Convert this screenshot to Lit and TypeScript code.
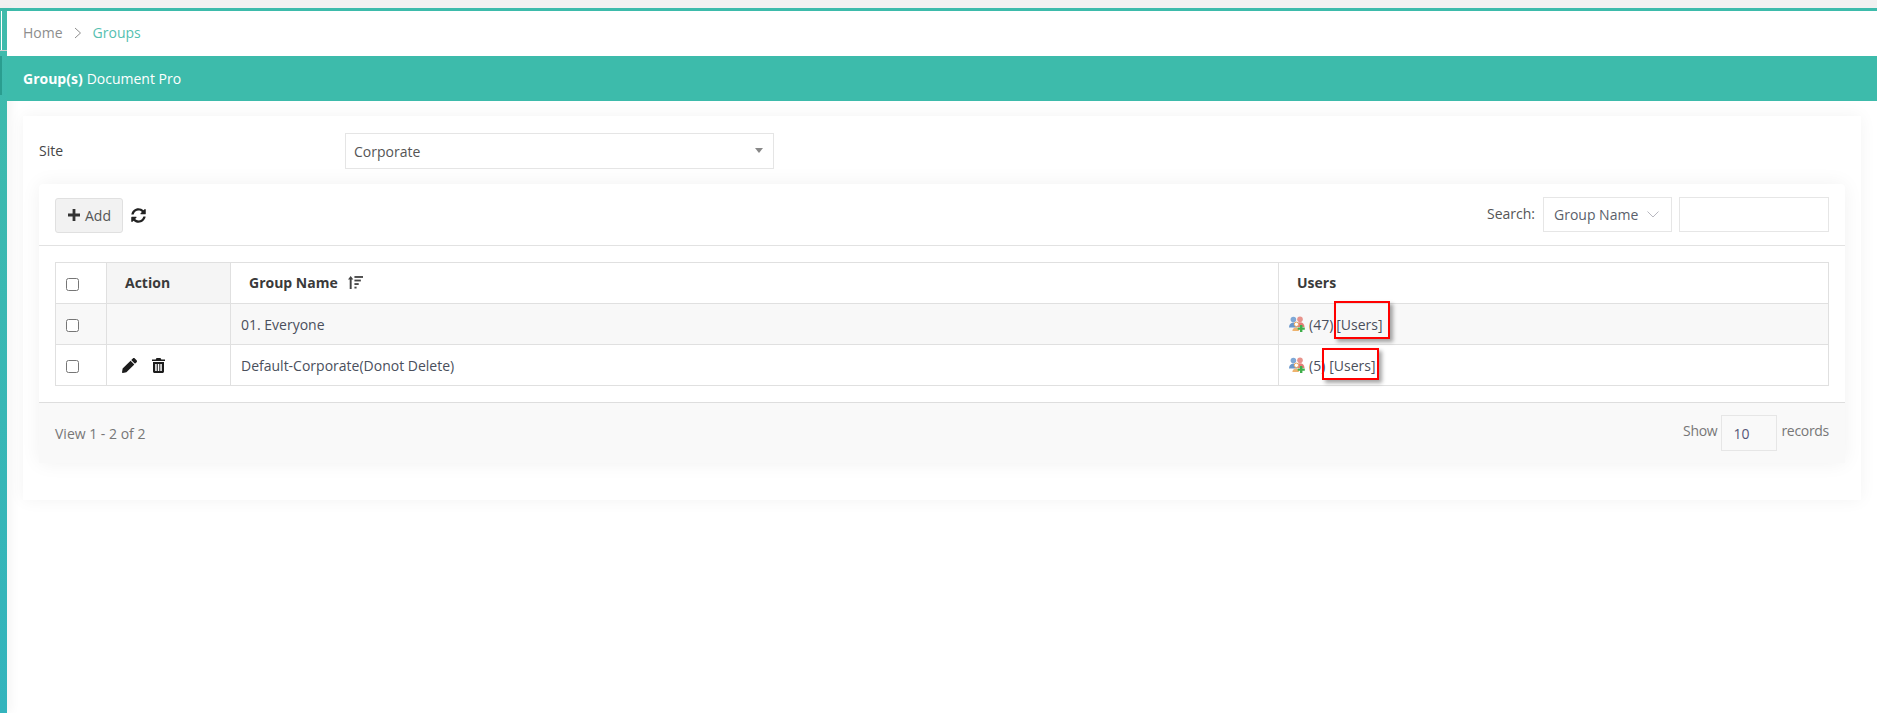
import { LitElement, html, css } from "lit";
import { customElement } from "lit/decorators.js";

const groupIcon = html`<svg class="gicon" viewBox="0 0 16 16" width="16" height="16">
  <circle cx="11" cy="3.200" r="2.800" fill="#e8938c"/>
  <path d="M7 11c0-3 1.500-4.800 4-4.800s4.500 1.800 4.500 4.800z" fill="#e47d76"/>
  <circle cx="4.400" cy="3.600" r="2.800" fill="#7fa8d6"/>
  <path d="M0 11.600c0-3 1.700-4.800 4.200-4.800s4 1.800 4 4.800z" fill="#6a97cb"/>
  <circle cx="7.400" cy="8.300" r="2.200" fill="#fff" stroke="#e8a55c" stroke-width="1"/>
  <path d="M3.400 15c0-2.200 1.500-3.500 4-3.500 1 0 1.800.2 2.400.7V15z" fill="#eeb36f"/>
  <path d="M11 9h2.400v2.400h2.400v2.400h-2.400V16H11v-2.200H8.700v-2.400H11z" fill="#3fae4a"/>
</svg>`;

@customElement("app-root")
export class AppRoot extends LitElement {
  static styles = css`
    :host {
      display: block;
      height: 713px;
      overflow: hidden;
      position: relative;
      background: #fff;
      font-family: "Open Sans", "Noto Sans", sans-serif;
      font-size: 14px;
      color: #464a55;
    }
    .topband { height: 8px; background: #f1f1f1; }
    .topline { height: 3px; background: #3dbbab; }
    .frame { display: flex; height: 702px; }
    .rail {
      width: 7px;
      flex: none;
      background: linear-gradient(#3fbbab, #33b4bd);
      display: flex;
      flex-direction: column;
      box-shadow: 2px 0 12px rgba(0,0,0,.07);
    }
    .rail-a { height: 39px; flex: none; display: flex; border-bottom: 1px solid #cfcfcf; padding-left: 1px; }
    .rail-a i { display: block; width: 1px; background: #fff; }
    .rail-b { margin-top: 5px; height: 39px; width: 2px; background: #2a9d8f; }
    .main { flex: 1; min-width: 0; }
    .crumbs {
      height: 45px;
      display: flex;
      align-items: center;
      padding-left: 16px;
      background: #fff;
      color: #8d8d8d;
    }
    .crumbs span { margin-top: -2px; }
    .crumbs .chev { width: 8px; height: 12px; margin: -1px 11px 0 11px; }
    .crumbs .cur { color: #55bfb1; }
    .title {
      height: 45px;
      display: flex;
      align-items: center;
      padding-left: 16px;
      background: #3dbbab;
      color: #fff;
      gap: 4px;
    }
    .title b { font-weight: 700; }
    .card {
      margin: 15px 16px 0 16px;
      padding: 17px 16px 36px;
      background: #fff;
      box-shadow: 0 0 16px rgba(0,0,0,.05);
      height: 331px;
    }
    .site { display: flex; align-items: center; height: 36px; }
    .site label { width: 306px; margin-top: -1px; color: #454545; }
    .sel {
      width: 429px;
      height: 36px;
      box-sizing: border-box;
      border: 1px solid #e5e5e5;
      display: flex;
      align-items: center;
      justify-content: space-between;
      padding: 0 10px 0 8px;
      color: #555;
    }
    .caret { width: 0; height: 0; border: 4px solid transparent; border-top: 5px solid #888; border-bottom: 0; margin-top: -2px; }
    .panel {
      margin-top: 15px;
      background: #fff;
      box-shadow: 0 0 20px rgba(0,0,0,.06);
      height: 279px;
      display: flex;
      flex-direction: column;
      border-radius: 4px 4px 0 0;
    }
    .toolbar {
      height: 61px;
      box-sizing: content-box;
      border-bottom: 1px solid #e2e2e2;
      display: flex;
      align-items: center;
      padding: 0 16px;
    }
    .add {
      width: 68px;
      height: 35px;
      box-sizing: border-box;
      background: #f2f2f2;
      border: 1px solid #e0e0e0;
      border-radius: 3px;
      display: flex;
      align-items: center;
      gap: 5px;
      padding-left: 12px;
      color: #555;
      font: inherit;
      margin-top: 1px;
    }
    .refresh { width: 15px; height: 15px; margin-left: 8px; margin-top: 1px; fill: #222; }
    .spacer { flex: 1; }
    .srch { margin-right: 8px; color: #555; margin-top: -3px; }
    .field {
      height: 35px;
      box-sizing: border-box;
      border: 1px solid #e6e6e6;
      display: flex;
      align-items: center;
      margin-top: -1px;
    }
    .field.a { width: 129px; padding-left: 10px; gap: 9px; color: #5b5f6b; margin-right: 7px; }
    .field.a span { margin-top: 1px; }
    .field.b { width: 150px; }
    .down { width: 12px; height: 7px; }
    .tablewrap { padding: 16px; }
    table {
      width: 100%;
      border-collapse: collapse;
      table-layout: fixed;
      border: 1px solid #e0e0e0;
    }
    th, td {
      border: 1px solid #e0e0e0;
      height: 41px;
      box-sizing: border-box;
      padding: 0;
      text-align: left;
      font-weight: 400;
      color: #4a4f5c;
    }
    th { font-weight: 700; color: #3a3a3a; padding-bottom: 2px; }
    th:first-child { padding-bottom: 0; }
    th.act { background: #f5f5f5; padding-left: 18px; }
    th.nm { padding-left: 18px; }
    th.us { padding-left: 18px; }
    td.nm { padding-left: 10px; }
    td.us { padding-left: 10px; }
    .c0 { width: 51px; }
    .c1 { width: 124px; }
    .c3 { width: 550px; }
    tr.odd td { background: #f8f8f8; }
    .cbx {
      display: block;
      width: 13px;
      height: 13px;
      box-sizing: border-box;
      border: 1px solid #767676;
      border-radius: 2.500px;
      background: #fff;
      margin: 2px 0 0 10px;
    }
    .sorti { width: 15px; height: 15px; vertical-align: -2px; margin-left: 7px; fill: #444; }
    .iconrow { display: flex; align-items: center; gap: 15px; padding-left: 15px; }
    .iconrow svg { fill: #1c1c1c; display: block; }
    .ucell { display: flex; align-items: center; gap: 4px; }
    .gicon { flex: none; margin-top: -1px; }
    .ucell .tight { margin-left: -1px; }
    .foot {
      flex: 1;
      background: #f9f9f9;
      border-top: 1px solid #dedede;
      display: flex;
      align-items: center;
      padding: 0 16px;
      color: #777;
    }
    .show { display: flex; align-items: center; gap: 4px; }
    .pg {
      width: 56px;
      height: 36px;
      box-sizing: border-box;
      border: 1px solid #e6e6e6;
      display: flex;
      align-items: center;
      padding-left: 11px;
      color: #557;
    }
    .show > span { margin-top: -5px; letter-spacing: -.3px; }
    .mark {
      position: absolute;
      box-sizing: border-box;
      border: 2.500px solid #f00;
      box-shadow: 3px 3px 4px rgba(0,0,0,.35);
      pointer-events: none;
    }
    .m1 { left: 1334px; top: 301px; width: 56px; height: 38px; }
    .m2 { left: 1322px; top: 348px; width: 57px; height: 32px; }
  `;

  private check() {
    return html`<span class="cbx"></span>`;
  }

  render() {
    return html`
      <div class="topband"></div>
      <div class="topline"></div>
      <div class="frame">
        <div class="rail"><div class="rail-a"><i></i></div><div class="rail-b"></div></div>
        <div class="main">
          <div class="crumbs">
            <span>Home</span>
            <svg class="chev" viewBox="0 0 8 12"><path d="M1 1l5.500 5L1 11" fill="none" stroke="#8d8d8d" stroke-width="1"/></svg>
            <span class="cur">Groups</span>
          </div>
          <div class="title"><b>Group(s)</b><span>Document Pro</span></div>
          <div class="card">
            <div class="site">
              <label>Site</label>
              <div class="sel"><span>Corporate</span><span class="caret"></span></div>
            </div>
            <div class="panel">
              <div class="toolbar">
                <button class="add">
                  <svg width="12" height="12" viewBox="0 0 12 12"><path d="M4.600 0h2.800v4.600H12v2.800H7.400V12H4.600V7.400H0V4.600h4.600z" fill="#333"/></svg>
                  <span>Add</span>
                </button>
                <svg class="refresh" viewBox="0 0 512 512"><path d="M370.72 133.28C339.458 104.008 298.888 87.962 255.848 88c-77.458.068-144.328 53.178-162.791 126.85-1.344 5.363-6.122 9.15-11.651 9.15H24.103c-7.498 0-13.194-6.807-11.807-14.176C33.933 94.924 134.813 8 256 8c66.448 0 126.791 26.136 171.315 68.685L463.03 40.97C478.149 25.851 504 36.559 504 57.941V192c0 13.255-10.745 24-24 24H345.941c-21.382 0-32.09-25.851-16.971-40.971l41.75-41.749zM32 296h134.059c21.382 0 32.09 25.851 16.971 40.971l-41.75 41.75c31.262 29.273 71.835 45.319 114.876 45.28 77.418-.07 144.315-53.144 162.787-126.849 1.344-5.363 6.122-9.15 11.651-9.15h57.304c7.498 0 13.194 6.807 11.807 14.176C478.067 417.076 377.187 504 256 504c-66.448 0-126.791-26.136-171.315-68.685L48.97 471.03C33.851 486.149 8 475.441 8 454.059V320c0-13.255 10.745-24 24-24z"/></svg>
                <span class="spacer"></span>
                <span class="srch">Search:</span>
                <div class="field a"><span>Group Name</span><svg class="down" viewBox="0 0 12 7"><path d="M.5.5L6 6 11.500.5" fill="none" stroke="#b8b8c0" stroke-width="1"/></svg></div>
                <div class="field b"></div>
              </div>
              <div class="tablewrap">
                <table>
                  <colgroup><col class="c0"/><col class="c1"/><col/><col class="c3"/></colgroup>
                  <thead>
                    <tr>
                      <th>${this.check()}</th>
                      <th class="act">Action</th>
                      <th class="nm">Group Name
                        <svg class="sorti" viewBox="0 0 14 14">
                          <path d="M2.500 1L5 4.200H3.400V13H1.600V4.200H0z"/>
                          <rect x="6" y="1" width="8" height="1.700"/>
                          <rect x="6" y="4.300" width="6" height="1.700"/>
                          <rect x="6" y="7.600" width="4" height="1.700"/>
                          <rect x="6" y="10.900" width="2" height="1.700"/>
                        </svg>
                      </th>
                      <th class="us">Users</th>
                    </tr>
                  </thead>
                  <tbody>
                    <tr class="odd">
                      <td>${this.check()}</td>
                      <td></td>
                      <td class="nm">01. Everyone</td>
                      <td class="us"><div class="ucell">${groupIcon}<span>(47)</span><span class="tight">[Users]</span></div></td>
                    </tr>
                    <tr>
                      <td>${this.check()}</td>
                      <td>
                        <div class="iconrow">
                          <svg width="15" height="15" viewBox="0 0 512 512"><path d="M497.9 142.1l-46.1 46.1c-4.700 4.700-12.300 4.700-17 0l-111-111c-4.700-4.700-4.700-12.300 0-17l46.100-46.100c18.700-18.700 49.100-18.700 67.900 0l60.100 60.100c18.800 18.700 18.800 49.100 0 67.900zM284.200 99.800L21.600 362.400.4 483.900c-2.900 16.400 11.400 30.600 27.800 27.800l121.500-21.300 262.600-262.600c4.700-4.700 4.700-12.300 0-17l-111-111c-4.800-4.700-12.400-4.700-17.100 0z"/></svg>
                          <svg width="13" height="15" viewBox="0 0 13 15"><path fill-rule="evenodd" d="M4.500 0h4l.8 1.400H13v1.600H0V1.400h3.700zM1 4h11v9.500c0 .8-.7 1.500-1.500 1.500h-8C1.700 15 1 14.300 1 13.500zM3.200 6v7h1.500V6zM5.800 6v7h1.500V6zM8.300 6v7h1.500V6z"/></svg>
                        </div>
                      </td>
                      <td class="nm">Default-Corporate(Donot Delete)</td>
                      <td class="us"><div class="ucell">${groupIcon}<span>(5)</span><span>[Users]</span></div></td>
                    </tr>
                  </tbody>
                </table>
              </div>
              <div class="foot">
                <span>View 1 - 2 of 2</span>
                <span class="spacer"></span>
                <div class="show"><span>Show</span><div class="pg">10</div><span>records</span></div>
              </div>
            </div>
          </div>
        </div>
      </div>
      <div class="mark m1"></div>
      <div class="mark m2"></div>
    `;
  }
}
